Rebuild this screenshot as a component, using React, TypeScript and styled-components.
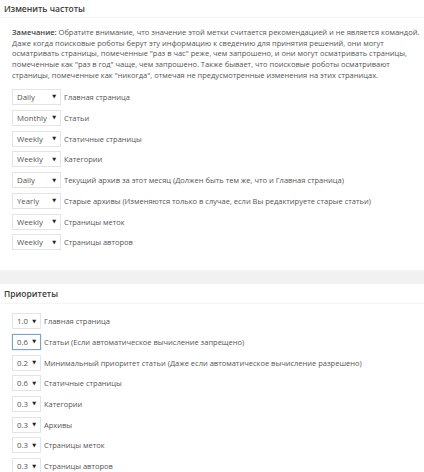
import styled, { createGlobalStyle } from 'styled-components';

const GlobalStyle = createGlobalStyle`
  html, body {
    margin: 0;
    padding: 0;
    background: #fff;
  }
  body {
    font-family: 'Open Sans', 'DejaVu Sans', sans-serif;
    color: #555;
  }
`;

const Page = styled.div`
  display: flex;
  flex-direction: column;
  width: 424px;
  overflow: hidden;
`;

const Section = styled.section`
  display: flex;
  flex-direction: column;
`;

const SectionTitle = styled.h3<{ $height: number }>`
  margin: 0;
  height: ${(p) => p.$height}px;
  padding-left: 4px;
  display: flex;
  align-items: center;
  font-size: 8.5px;
  font-weight: 600;
  color: #3a3a3a;
  border-bottom: 1px solid #f4f4f4;
`;

const Note = styled.div`
  margin: 9px 0 0 12px;
  font-size: 7.5px;
  line-height: 10.7px;
  color: #555;
`;

const NoteLine = styled.span`
  display: block;
  white-space: nowrap;
`;

const Strong = styled.b`
  font-weight: 600;
  color: #444;
`;

const Rows = styled.div<{ $top: number; $row: number }>`
  display: grid;
  grid-auto-rows: ${(p) => p.$row}px;
  margin-top: ${(p) => p.$top}px;
  padding-left: 12px;
`;

const Row = styled.div`
  display: flex;
  align-items: center;
  gap: 3px;
  font-size: 7.5px;
  color: #555;
  white-space: nowrap;
`;

const Select = styled.div<{ $width: number; $focused?: boolean }>`
  box-sizing: border-box;
  width: ${(p) => p.$width}px;
  height: 16px;
  flex: none;
  display: flex;
  align-items: center;
  justify-content: space-between;
  padding: 0 4px 0 4px;
  border: 1px solid ${(p) => (p.$focused ? '#7fa3c4' : '#e4e4e4')};
  box-shadow: ${(p) => (p.$focused ? '0 0 1px rgba(30,140,190,.5)' : 'none')};
  background: #fff;
  font-size: 7.8px;
  color: #555;
`;

const Arrow = styled.span`
  font-size: 5px;
  color: #222;
  line-height: 1;
`;

const Band = styled.div`
  margin-top: 17px;
  height: 14px;
  background: #f1f1f1;
`;

const noteLines = [
  'Даже когда поисковые роботы берут эту информацию к сведению для принятия решений, они могут',
  'осматривать страницы, помеченные "раз в час" реже, чем запрошено, и они могут осматривать страницы,',
  'помеченные как "раз в год" чаще, чем запрошено. Также бывает, что поисковые роботы осматривают',
  'страницы, помеченные как "никогда", отмечая не предусмотренные изменения на этих страницах.',
];

const frequencies: [string, string][] = [
  ['Daily', 'Главная страница'],
  ['Monthly', 'Статьи'],
  ['Weekly', 'Статичные страницы'],
  ['Weekly', 'Категории'],
  ['Daily', 'Текущий архив за этот месяц (Должен быть тем же, что и Главная страница)'],
  ['Yearly', 'Старые архивы (Изменяются только в случае, если Вы редактируете старые статьи)'],
  ['Weekly', 'Страницы меток'],
  ['Weekly', 'Страницы авторов'],
];

const priorities: [string, string][] = [
  ['1.0', 'Главная страница'],
  ['0.6', 'Статьи (Если автоматическое вычисление запрещено)'],
  ['0.2', 'Минимальный приоритет статьи (Даже если автоматическое вычисление разрешено)'],
  ['0.6', 'Статичные страницы'],
  ['0.3', 'Категории'],
  ['0.3', 'Архивы'],
  ['0.3', 'Страницы меток'],
  ['0.3', 'Страницы авторов'],
];

export default function App() {
  return (
    <Page>
      <GlobalStyle />
      <Section>
        <SectionTitle $height={17}>Изменить частоты</SectionTitle>
        <Note>
          <NoteLine>
            <Strong>Замечание:</Strong> Обратите внимание, что значение этой метки считается рекомендацией и не является командой.
          </NoteLine>
          {noteLines.map((l) => (
            <NoteLine key={l}>{l}</NoteLine>
          ))}
        </Note>
        <Rows $top={6} $row={20.8}>
          {frequencies.map(([v, label], i) => (
            <Row key={i}>
              <Select $width={49}>
                {v}
                <Arrow>▼</Arrow>
              </Select>
              {label}
            </Row>
          ))}
        </Rows>
      </Section>
      <Band />
      <Section>
        <SectionTitle $height={19}>Приоритеты</SectionTitle>
        <Rows $top={7} $row={20.7}>
          {priorities.map(([v, label], i) => (
            <Row key={i}>
              <Select $width={29} $focused={i === 1}>
                {v}
                <Arrow>▼</Arrow>
              </Select>
              {label}
            </Row>
          ))}
        </Rows>
      </Section>
    </Page>
  );
}
